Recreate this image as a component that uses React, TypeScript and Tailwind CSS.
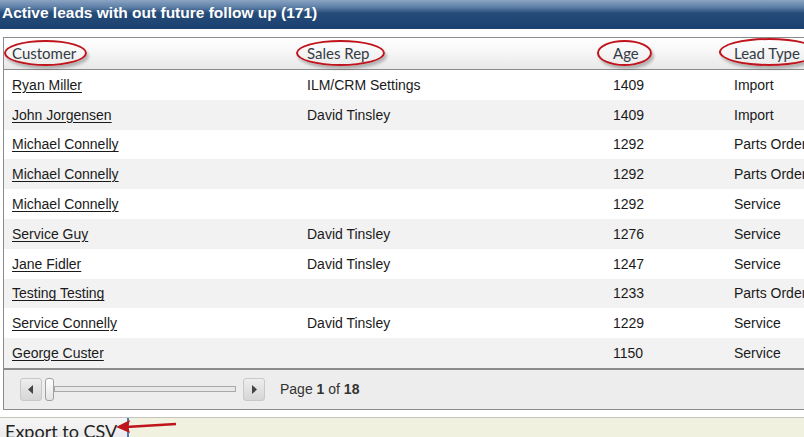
import React from "react";

const rows = [
  ["Ryan Miller", "ILM/CRM Settings", "1409", "Import"],
  ["John Jorgensen", "David Tinsley", "1409", "Import"],
  ["Michael Connelly", "", "1292", "Parts Order"],
  ["Michael Connelly", "", "1292", "Parts Order"],
  ["Michael Connelly", "", "1292", "Service"],
  ["Service Guy", "David Tinsley", "1276", "Service"],
  ["Jane Fidler", "David Tinsley", "1247", "Service"],
  ["Testing Testing", "", "1233", "Parts Order"],
  ["Service Connelly", "David Tinsley", "1229", "Service"],
  ["George Custer", "", "1150", "Service"],
];

const cols = "grid grid-cols-[295px_306px_121px_1fr]";

function Ellipse({ left, top, width, height }: { left: number; top: number; width: number; height: number }) {
  return (
    <div
      className="absolute rounded-[50%] border-2 border-[#c0141c] shadow-[2px_3px_3px_rgba(0,0,0,0.25)]"
      style={{ left, top, width, height }}
    />
  );
}

export default function App() {
  return (
    <div className="relative w-[804px] h-[437px] overflow-hidden bg-white font-['Liberation_Sans',Arial,sans-serif]">
      <div className="h-[29px] bg-[linear-gradient(to_bottom,#8aa3c2_0%,#5d7fa6_25%,#264c79_45%,#1a4170_100%)] pl-[2px] pt-[4px] text-[15.5px] font-bold leading-[18px] text-white">
        Active leads with out future follow up (171)
      </div>
      <div className="h-[8px]" />
      <div className="w-[840px] ml-[3px] border border-[#8c8c8c]">
        <div className={`${cols} h-[32px] items-center border-b border-[#8c8c8c] bg-[linear-gradient(to_bottom,#ffffff_0%,#f5f5f5_50%,#e8e8e8_100%)] font-['Lato',sans-serif] text-[15px] text-[#333a44]`}>
          <div className="pl-[8px]">Customer</div>
          <div className="pl-[8px]">Sales Rep</div>
          <div className="pl-[8px]">Age</div>
          <div className="pl-[8px]">Lead Type</div>
        </div>
        {rows.map((r, i) => (
          <div
            key={i}
            className={`${cols} h-[29.8px] items-center pt-[1px] text-[14px] text-[#1a1a1a] ${i % 2 === 1 ? "bg-[#f2f2f2]" : "bg-white"}`}
          >
            <div className="pl-[8px] underline underline-offset-2">{r[0]}</div>
            <div className="pl-[8px]">{r[1]}</div>
            <div className="pl-[8px]">{r[2]}</div>
            <div className="pl-[8px] whitespace-nowrap">{r[3]}</div>
          </div>
        ))}
        <div className="h-[41px] border-t-2 border-[#8c8c8c] bg-[#ededed] flex items-center pl-[16px]">
          <button className="w-[22px] h-[23px] rounded-[3px] border border-[#c8c8c8] bg-[linear-gradient(to_bottom,#eeeeee,#d6d6d6)] flex items-center justify-center">
            <svg width="6" height="9" viewBox="0 0 6 9"><path d="M5 0 L0 4.5 L5 9 Z" fill="#444" /></svg>
          </button>
          <div className="ml-[3px] w-[9px] h-[23px] rounded-[3px] border border-[#a0a0a0] bg-[linear-gradient(to_bottom,#ffffff,#e4e4e4)]" />
          <div className="w-[182px] h-[6px] border border-[#a8a8a8] bg-[#e8e8e8]" />
          <button className="ml-[7px] w-[22px] h-[23px] rounded-[3px] border border-[#c8c8c8] bg-[linear-gradient(to_bottom,#eeeeee,#d6d6d6)] flex items-center justify-center">
            <svg width="6" height="9" viewBox="0 0 6 9"><path d="M1 0 L6 4.5 L1 9 Z" fill="#444" /></svg>
          </button>
          <div className="ml-[15px] text-[14px] text-[#333]">
            Page <b>1</b> of <b>18</b>
          </div>
        </div>
      </div>
      <div className="h-[7px]" />
      <div className="h-[30px] border-t border-[#c4c4bc] bg-[#f1f1df] flex">
        <div className="h-full w-[129px] border-r-2 border-[#4a78b8] bg-[linear-gradient(to_bottom,#f6f6f6,#e6e6e6)] pl-[5px] pt-[2px] font-['Lato',sans-serif] text-[18px] leading-[22px] text-[#222]">
          Export to CSV
        </div>
      </div>

      <Ellipse left={4} top={40} width={83} height={26} />
      <Ellipse left={296} top={40} width={89} height={26} />
      <Ellipse left={597} top={40} width={55} height={26} />
      <Ellipse left={719} top={38} width={100} height={28} />

      <svg className="absolute left-[112px] top-[416px]" width="70" height="20" viewBox="0 0 70 20">
        <line x1="64" y1="8" x2="14" y2="11" stroke="#c0141c" strokeWidth="2.5" />
        <path d="M4 11 L18 4 L16 11 L18 17 Z" fill="#c0141c" />
      </svg>
    </div>
  );
}
